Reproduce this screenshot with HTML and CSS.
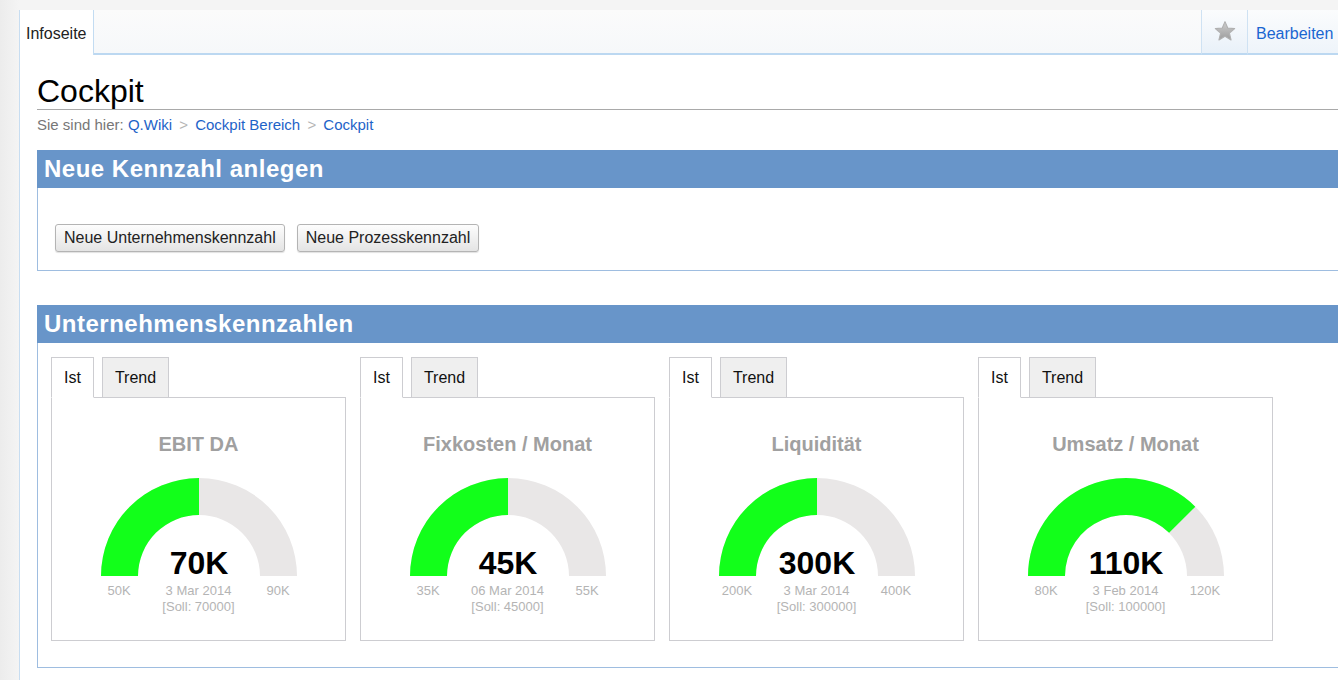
FILE: index.html
```html
<!DOCTYPE html>
<html lang="de">
<head>
<meta charset="utf-8">
<title>Cockpit</title>
<link rel="stylesheet" href="styles.css">
</head>
<body>
<div class="page">
  <div class="tabbar">
    <div class="tab-active">Infoseite</div>
    <div class="tab-fill"></div>
    <div class="tab-star">
      <svg width="22" height="22" viewBox="0 0 20 20">
        <defs>
          <linearGradient id="sg" x1="0" y1="0" x2="0" y2="1">
            <stop offset="0" stop-color="#cfcfcf"/>
            <stop offset="1" stop-color="#9c9c9c"/>
          </linearGradient>
        </defs>
        <path d="M10 1.5 L12.5 7.3 L18.8 7.8 L14 11.9 L15.5 18.1 L10 14.8 L4.5 18.1 L6 11.9 L1.2 7.8 L7.5 7.3 Z" fill="url(#sg)" stroke="#b0b0b0" stroke-width="1" stroke-linejoin="round"/>
      </svg>
    </div>
    <div class="tab-edit">Bearbeiten</div>
  </div>

  <div class="content">
    <h1 class="title">Cockpit</h1>
    <div class="crumbs">
      <span class="crumb-label">Sie sind hier:</span>
      <a class="crumb-link">Q.Wiki</a>
      <span class="crumb-sep">&gt;</span>
      <a class="crumb-link">Cockpit Bereich</a>
      <span class="crumb-sep">&gt;</span>
      <a class="crumb-link">Cockpit</a>
    </div>

    <section class="box box-new">
      <h2 class="box-head">Neue Kennzahl anlegen</h2>
      <div class="box-body buttons">
        <button class="btn">Neue Unternehmenskennzahl</button>
        <button class="btn">Neue Prozesskennzahl</button>
      </div>
    </section>

    <section class="box box-kpi">
      <h2 class="box-head">Unternehmenskennzahlen</h2>
      <div class="box-body widgets">

        <div class="widget">
          <div class="wtabs">
            <div class="wtab wtab-on">Ist</div>
            <div class="wtab">Trend</div>
          </div>
          <div class="panel">
            <div class="ptitle">EBIT DA</div>
            <svg class="gauge" width="196" height="98" viewBox="0 0 196 98">
              <path d="M0 98 A98 98 0 0 1 196 98 L159 98 A61 61 0 0 0 37 98 Z" fill="#e9e7e7"/>
              <path d="M0 98 A98 98 0 0 1 98 0 L98 37 A61 61 0 0 0 37 98 Z" fill="#12ff1a"/>
              <text x="98" y="96" text-anchor="middle" class="gval">70K</text>
            </svg>
            <div class="glabels">
              <span class="gmin">50K</span>
              <span class="gmid">3 Mar 2014<br>[Soll: 70000]</span>
              <span class="gmax">90K</span>
            </div>
          </div>
        </div>

        <div class="widget">
          <div class="wtabs">
            <div class="wtab wtab-on">Ist</div>
            <div class="wtab">Trend</div>
          </div>
          <div class="panel">
            <div class="ptitle">Fixkosten / Monat</div>
            <svg class="gauge" width="196" height="98" viewBox="0 0 196 98">
              <path d="M0 98 A98 98 0 0 1 196 98 L159 98 A61 61 0 0 0 37 98 Z" fill="#e9e7e7"/>
              <path d="M0 98 A98 98 0 0 1 98 0 L98 37 A61 61 0 0 0 37 98 Z" fill="#12ff1a"/>
              <text x="98" y="96" text-anchor="middle" class="gval">45K</text>
            </svg>
            <div class="glabels">
              <span class="gmin">35K</span>
              <span class="gmid">06 Mar 2014<br>[Soll: 45000]</span>
              <span class="gmax">55K</span>
            </div>
          </div>
        </div>

        <div class="widget">
          <div class="wtabs">
            <div class="wtab wtab-on">Ist</div>
            <div class="wtab">Trend</div>
          </div>
          <div class="panel">
            <div class="ptitle">Liquidität</div>
            <svg class="gauge" width="196" height="98" viewBox="0 0 196 98">
              <path d="M0 98 A98 98 0 0 1 196 98 L159 98 A61 61 0 0 0 37 98 Z" fill="#e9e7e7"/>
              <path d="M0 98 A98 98 0 0 1 98 0 L98 37 A61 61 0 0 0 37 98 Z" fill="#12ff1a"/>
              <text x="98" y="96" text-anchor="middle" class="gval">300K</text>
            </svg>
            <div class="glabels">
              <span class="gmin">200K</span>
              <span class="gmid">3 Mar 2014<br>[Soll: 300000]</span>
              <span class="gmax">400K</span>
            </div>
          </div>
        </div>

        <div class="widget">
          <div class="wtabs">
            <div class="wtab wtab-on">Ist</div>
            <div class="wtab">Trend</div>
          </div>
          <div class="panel">
            <div class="ptitle">Umsatz / Monat</div>
            <svg class="gauge" width="196" height="98" viewBox="0 0 196 98">
              <path d="M0 98 A98 98 0 0 1 196 98 L159 98 A61 61 0 0 0 37 98 Z" fill="#e9e7e7"/>
              <path d="M0 98 A98 98 0 0 1 167.3 28.7 L141.13 54.87 A61 61 0 0 0 37 98 Z" fill="#12ff1a"/>
              <text x="98" y="96" text-anchor="middle" class="gval">110K</text>
            </svg>
            <div class="glabels">
              <span class="gmin">80K</span>
              <span class="gmid">3 Feb 2014<br>[Soll: 100000]</span>
              <span class="gmax">120K</span>
            </div>
          </div>
        </div>

      </div>
    </section>
  </div>
</div>
</body>
</html>
```

FILE: styles.css
```css
* { box-sizing: border-box; }

html, body {
  margin: 0;
  height: 100%;
}

body {
  padding: 10px 0 0 19px;
  overflow: hidden;
  font-family: "Liberation Sans", Arial, sans-serif;
  background: linear-gradient(to right, #ececec 0, #f4f4f4 19px);
  color: #000;
}

.page {
  background: #fff;
  border-left: 1px solid #c7ddf1;
  min-height: 100%;
  overflow: hidden;
}

/* top tab bar */
.tabbar {
  display: flex;
  height: 45px;
  font-size: 16px;
}

.tab-active {
  background: #fff;
  border-right: 1px solid #c3dcf2;
  padding: 15px 7px 0 6px;
  color: #222;
}

.tab-fill {
  flex: 1;
  background: linear-gradient(#fbfbfb, #f6f8fa);
  border-bottom: 2px solid #bcd8f1;
}

.tab-star {
  width: 47px;
  display: flex;
  align-items: center;
  justify-content: center;
  background: linear-gradient(#fbfcfd, #e9f1f9);
  border-left: 1px solid #cfe2f3;
  border-right: 1px solid #cfe2f3;
  border-bottom: 2px solid #bcd8f1;
  padding-bottom: 1px;
}

.tab-edit {
  width: 90px;
  padding: 15px 0 0 8px;
  color: #1a66d1;
  white-space: nowrap;
  background: linear-gradient(#fbfcfd, #eef4fa);
  border-bottom: 2px solid #bcd8f1;
}

/* content */
.content {
  padding-left: 17px;
}

.title {
  margin: 19px 0 0;
  font-size: 32px;
  font-weight: normal;
  line-height: 35px;
  border-bottom: 1px solid #a9a9a9;
  color: #000;
}

.crumbs {
  margin-top: 6px;
  font-size: 15px;
  line-height: 18px;
  color: #777;
}

.crumb-link {
  color: #1e63c8;
}

.crumb-sep {
  color: #b5b5b5;
  margin: 0 3px;
}

.box {
  border: 1px solid #9ebde0;
  margin-right: -3px;
}

.box-new {
  margin-top: 16px;
}

.box-kpi {
  margin-top: 34px;
}

.box-head {
  margin: -1px -1px 0;
  height: 38px;
  line-height: 38px;
  padding-left: 7px;
  background: #6895c9;
  color: #fff;
  font-size: 24px;
  font-weight: bold;
  letter-spacing: 0.5px;
}

.buttons {
  display: flex;
  gap: 12px;
  padding: 36px 0 18px 17px;
}

.btn {
  height: 28px;
  padding: 0 8px;
  font-family: "Liberation Sans", Arial, sans-serif;
  font-size: 16px;
  color: #222;
  background: linear-gradient(#fdfdfd, #e4e4e4);
  border: 1px solid #b4b4b4;
  border-radius: 3px;
  box-shadow: 0 1px 1px rgba(0,0,0,0.12);
}

/* widgets */
.widgets {
  display: flex;
  gap: 14px;
  padding: 14px 0 26px 13px;
}

.widget {
  width: 295px;
}

.wtabs {
  display: flex;
  gap: 8px;
  margin-bottom: -1px;
  position: relative;
  z-index: 1;
}

.wtab {
  height: 41px;
  padding: 11px 12px 0;
  font-size: 16px;
  color: #111;
  background: #efefef;
  border: 1px solid #cdcdd1;
  border-bottom: 1px solid #cdcdd1;
}

.wtab-on {
  background: #fff;
  border-bottom-color: #fff;
}

.panel {
  height: 244px;
  border: 1px solid #cdcdd1;
  display: flex;
  flex-direction: column;
  align-items: center;
  padding-top: 34px;
}

.ptitle {
  font-size: 20px;
  line-height: 24px;
  font-weight: bold;
  color: #a0a0a0;
}

.gauge {
  display: block;
  margin-top: 22px;
  overflow: visible;
}

.gval {
  font-family: "Liberation Sans", Arial, sans-serif;
  font-size: 32px;
  font-weight: bold;
  fill: #000;
}

.glabels {
  width: 196px;
  display: grid;
  grid-template-columns: 37px 1fr 37px;
  margin-top: 7px;
  font-size: 13px;
  line-height: 16px;
  color: #b4b4b4;
  text-align: center;
  white-space: nowrap;
}

.gmin, .gmax {
  display: flex;
  justify-content: center;
}
```
